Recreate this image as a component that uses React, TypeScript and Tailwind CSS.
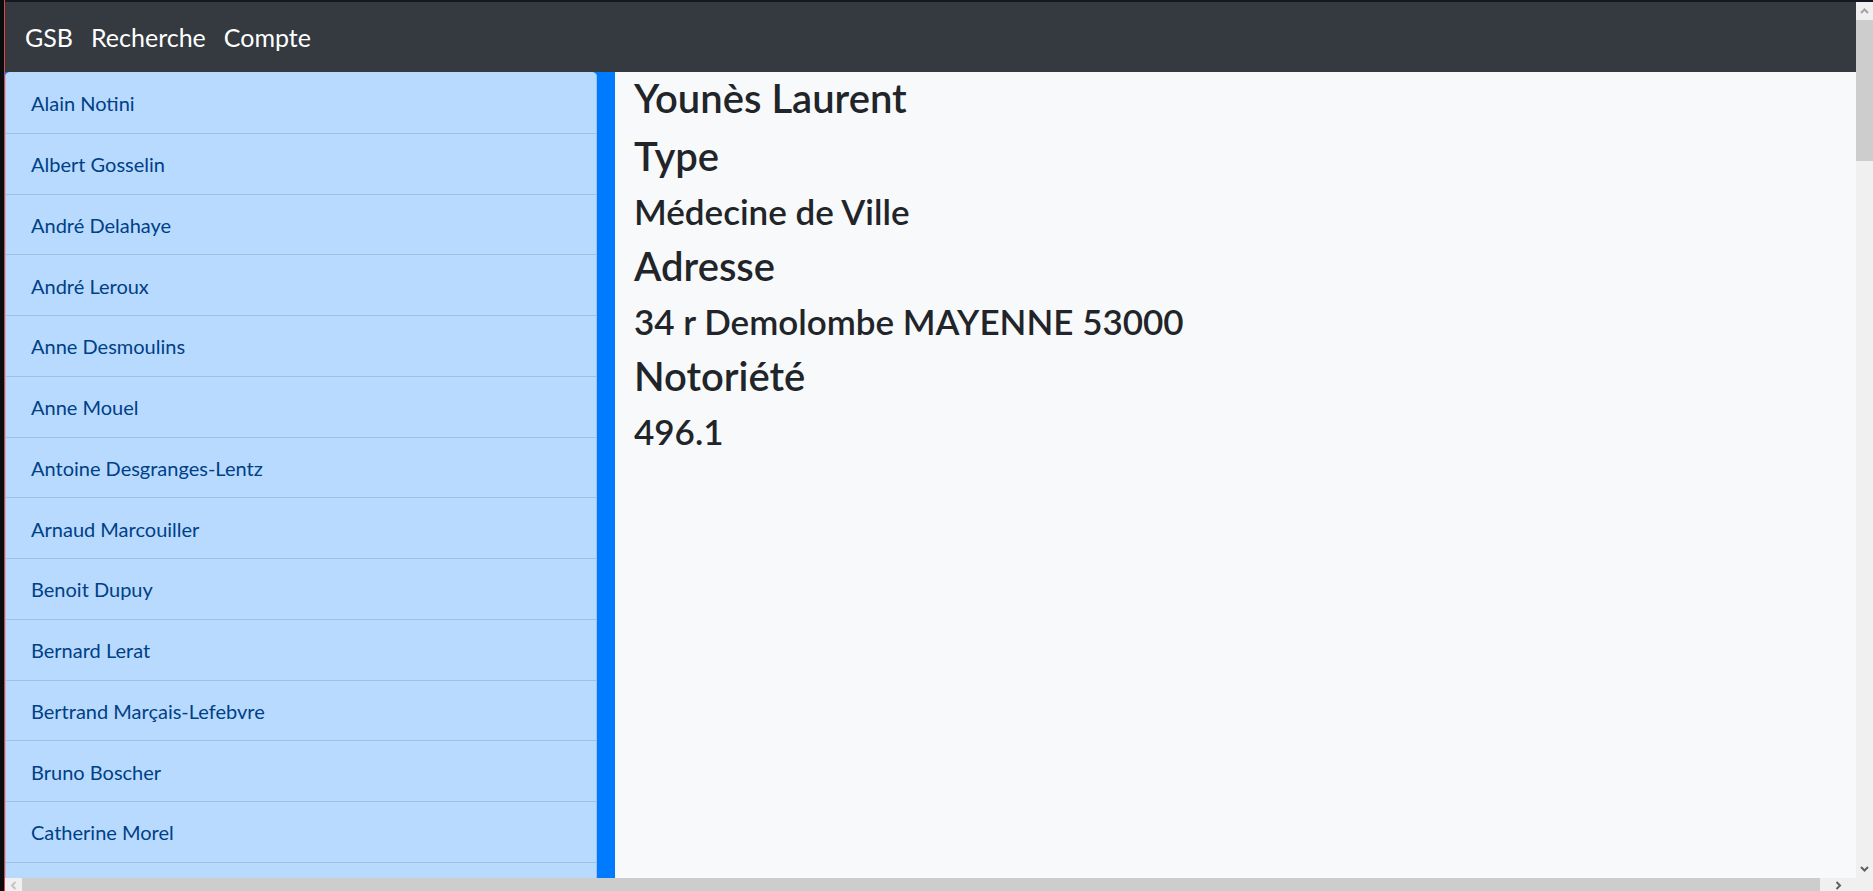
import React from "react";

const names = [
  "Alain Notini",
  "Albert Gosselin",
  "André Delahaye",
  "André Leroux",
  "Anne Desmoulins",
  "Anne Mouel",
  "Antoine Desgranges-Lentz",
  "Arnaud Marcouiller",
  "Benoit Dupuy",
  "Bernard Lerat",
  "Bertrand Marçais-Lefebvre",
  "Bruno Boscher",
  "Catherine Morel",
  "",
];

export default function App() {
  return (
    <div
      className="flex h-[891px] w-[1873px] overflow-hidden bg-[#0c0c0c]"
      style={{ fontFamily: "Lato, 'Noto Sans', sans-serif" }}
    >
      {/* left window edge */}
      <div className="w-[4px] shrink-0 bg-[#0c0c0c]" />
      <div className="w-[1px] shrink-0 bg-[#d9454b]" />
      <div className="flex min-w-0 flex-1 flex-col">
        <div className="h-[2px] shrink-0 bg-[#141821]" />
        <div className="flex min-h-0 flex-1">
          {/* page */}
          <div className="flex min-w-0 flex-1 flex-col">
            <div className="flex min-h-0 flex-1 flex-col">
              <nav className="flex h-[70px] shrink-0 items-center gap-[18px] bg-[#343a40] px-[20px] pt-[2px] text-[25px] text-white">
                <span>GSB</span>
                <span>Recherche</span>
                <span>Compte</span>
              </nav>
              <div className="flex min-h-0 flex-1">
                <div className="w-[610px] shrink-0 overflow-hidden bg-[#007bff]">
                  <ul className="w-[592px] overflow-hidden rounded-t-[5px] bg-[#b8daff]">
                    {names.map((n, i) => (
                      <li
                        key={i}
                        className="flex h-[60.75px] items-center border-x border-b border-[#a1bfdf] px-[25px] pt-[1px] text-[20px] text-[#004085] first:h-[61.75px]"
                      >
                        {n}
                      </li>
                    ))}
                  </ul>
                </div>
                <div className="min-w-0 flex-1 bg-[#f8f9fa] px-[19px] pt-[2px] text-[#212529]">
                  <h2 className="mb-[10px] text-[40px] leading-[48px] font-semibold">Younès Laurent</h2>
                  <h2 className="mb-[10px] text-[40px] leading-[48px] font-semibold">Type</h2>
                  <h3 className="mb-[10px] text-[35px] leading-[42px] font-semibold">Médecine de Ville</h3>
                  <h2 className="mb-[10px] text-[40px] leading-[48px] font-semibold">Adresse</h2>
                  <h3 className="mb-[10px] text-[35px] leading-[42px] font-semibold">34 r Demolombe MAYENNE 53000</h3>
                  <h2 className="mb-[10px] text-[40px] leading-[48px] font-semibold">Notoriété</h2>
                  <h3 className="mb-[10px] text-[35px] leading-[42px] font-semibold">496.1</h3>
                </div>
              </div>
            </div>
            {/* horizontal scrollbar */}
            <div className="flex h-[13px] shrink-0 items-end bg-[#f0f0f0]">
              <div className="flex h-[13px] w-[17px] items-end justify-center pb-[1px]">
                <svg width="8" height="9" viewBox="0 0 8 9">
                  <path d="M5.5 1 L2 4.5 L5.5 8" stroke="#c4c4c4" strokeWidth="2" fill="none" />
                </svg>
              </div>
              <div className="h-[13px] w-[1798px] bg-[#cdcdcd]" />
              <div className="flex h-[13px] flex-1 items-end justify-center pb-[1px]">
                <svg width="8" height="9" viewBox="0 0 8 9">
                  <path d="M2.5 1 L6 4.5 L2.5 8" stroke="#606060" strokeWidth="2" fill="none" />
                </svg>
              </div>
            </div>
          </div>
          {/* vertical scrollbar */}
          <div className="flex w-[17px] shrink-0 flex-col bg-[#f0f0f0]">
            <div className="flex h-[18px] items-center justify-center">
              <svg width="9" height="8" viewBox="0 0 9 8">
                <path d="M1 6 L4.5 2.5 L8 6" stroke="#a3a3a3" strokeWidth="2" fill="none" />
              </svg>
            </div>
            <div className="h-[141px] bg-[#cdcdcd]" />
            <div className="flex-1" />
            <div className="flex h-[18px] items-center justify-center">
              <svg width="9" height="8" viewBox="0 0 9 8">
                <path d="M1 2 L4.5 5.5 L8 2" stroke="#606060" strokeWidth="2" fill="none" />
              </svg>
            </div>
            <div className="h-[13px]" />
          </div>
        </div>
      </div>
    </div>
  );
}
